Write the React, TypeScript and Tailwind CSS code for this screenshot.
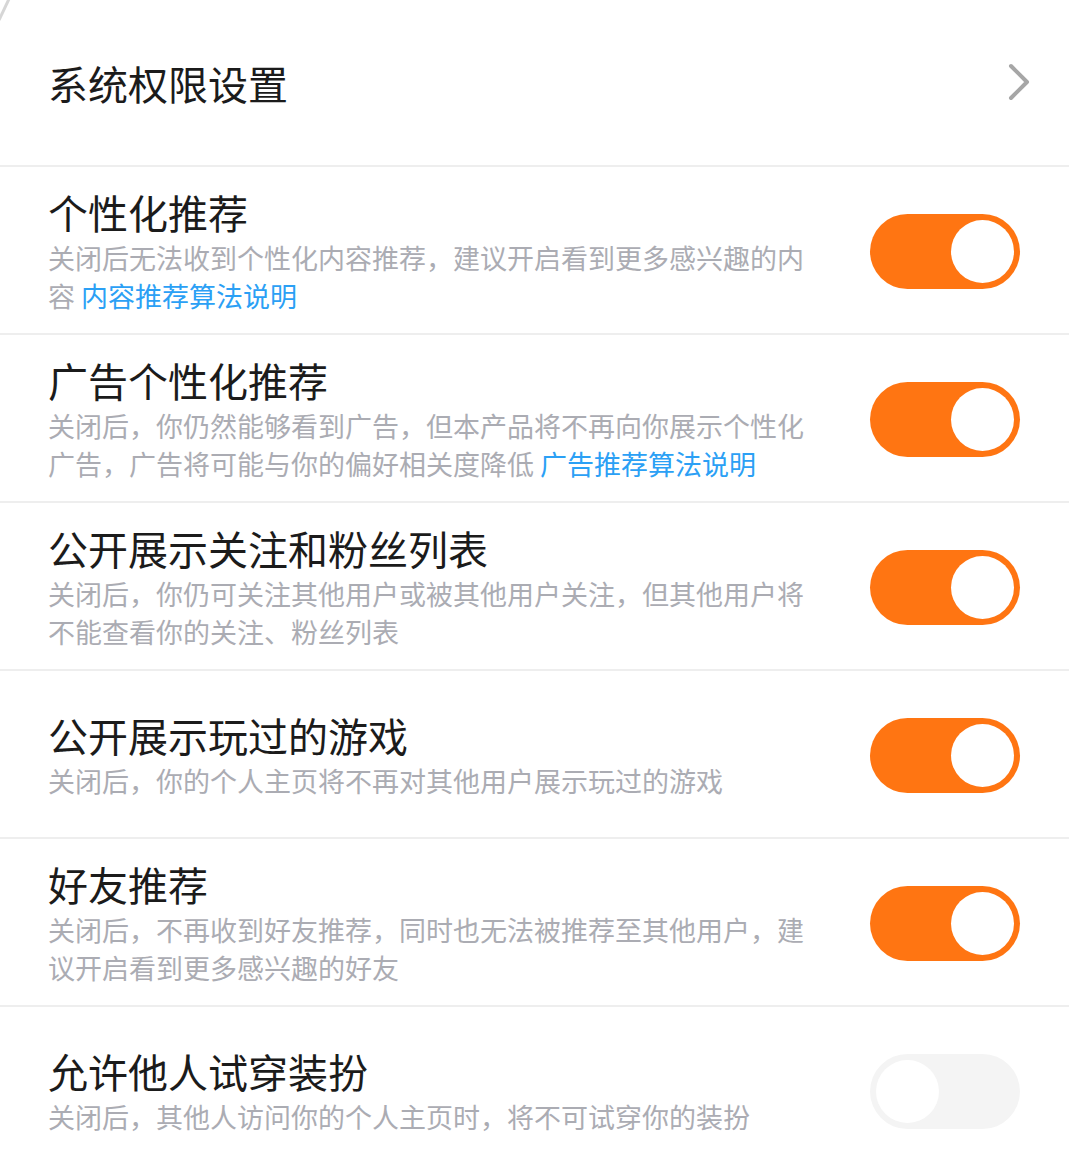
import { ReactNode } from "react";

type Item = {
  title: string;
  desc: string;
  link?: string;
  on: boolean;
};

const ITEMS: Item[] = [
  {
    title: "个性化推荐",
    desc: "关闭后无法收到个性化内容推荐，建议开启看到更多感兴趣的内容",
    link: "内容推荐算法说明",
    on: true,
  },
  {
    title: "广告个性化推荐",
    desc: "关闭后，你仍然能够看到广告，但本产品将不再向你展示个性化广告，广告将可能与你的偏好相关度降低",
    link: "广告推荐算法说明",
    on: true,
  },
  {
    title: "公开展示关注和粉丝列表",
    desc: "关闭后，你仍可关注其他用户或被其他用户关注，但其他用户将不能查看你的关注、粉丝列表",
    on: true,
  },
  {
    title: "公开展示玩过的游戏",
    desc: "关闭后，你的个人主页将不再对其他用户展示玩过的游戏",
    on: true,
  },
  {
    title: "好友推荐",
    desc: "关闭后，不再收到好友推荐，同时也无法被推荐至其他用户，建议开启看到更多感兴趣的好友",
    on: true,
  },
  {
    title: "允许他人试穿装扮",
    desc: "关闭后，其他人访问你的个人主页时，将不可试穿你的装扮",
    on: false,
  },
];

function Toggle({ on }: { on: boolean }) {
  return (
    <div
      className={
        on
          ? "flex h-[75px] w-[150px] shrink-0 items-center justify-end rounded-full bg-[#ff7512] pr-[6px]"
          : "flex h-[75px] w-[150px] shrink-0 items-center justify-start rounded-full bg-[#f4f4f4] pl-[6px]"
      }
    >
      <div className="h-[63px] w-[63px] rounded-full bg-white" />
    </div>
  );
}

function Row({ children, right, first }: { children: ReactNode; right: ReactNode; first?: boolean }) {
  return (
    <div
      className={
        first
          ? "flex h-[167px] items-center border-b-2 border-[#eeeeee] pl-[48px] pr-[49px]"
          : "flex h-[168px] items-center border-b-2 border-[#eeeeee] pl-[48px] pr-[49px] pt-[2px]"
      }
    >
      <div className="w-[772px]">{children}</div>
      <div className="ml-auto">{right}</div>
    </div>
  );
}

export default function App() {
  return (
    <div
      className="relative min-h-[1156px] w-full overflow-hidden bg-white text-[#1b1b1b]"
      style={{ fontFamily: '"Noto Sans CJK SC", "Noto Sans", sans-serif' }}
    >
      <svg className="absolute left-0 top-0" width="12" height="24" viewBox="0 0 12 24">
        <line x1="-1" y1="20" x2="9" y2="-1" stroke="#d6d6d6" strokeWidth="3" />
      </svg>

      <Row
        first
        right={
          <svg width="24" height="40" viewBox="0 0 24 40" className="mr-[-12px]">
            <polyline
              points="3,3 19,19 3,35"
              fill="none"
              stroke="#a6a6a6"
              strokeWidth="4"
              strokeLinecap="round"
              strokeLinejoin="round"
            />
          </svg>
        }
      >
        <div className="text-[40px] leading-[46px]">系统权限设置</div>
      </Row>

      {ITEMS.map((it) => (
        <Row key={it.title} right={<Toggle on={it.on} />}>
          <div className="pt-[2px] text-[40px] leading-[46px]">{it.title}</div>
          <div className="mt-[4px] text-[27px] leading-[38px] text-[#abacb3]">
            {it.desc}
            {it.link && (
              <>
                {" "}
                <span className="inline-block leading-[38px] text-[#2ba0f5]">{it.link}</span>
              </>
            )}
          </div>
        </Row>
      ))}
    </div>
  );
}
